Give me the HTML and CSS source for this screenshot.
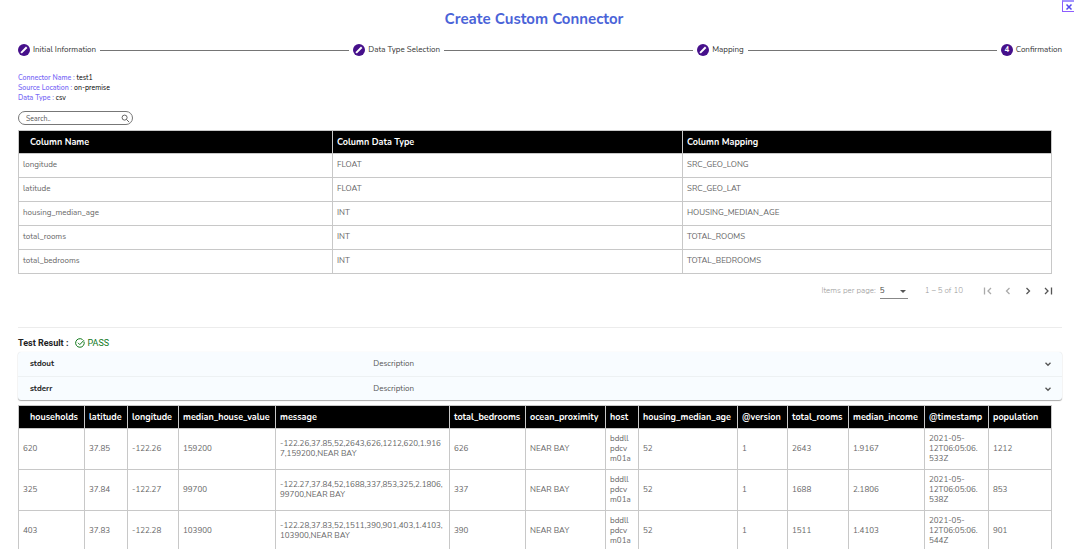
FILE: index.html
```
<!DOCTYPE html>
<html lang="en">
<head>
<meta charset="utf-8">
<title>Create Custom Connector</title>
<link rel="stylesheet" href="styles.css">
</head>
<body>
<main class="dialog">
  <button class="close" type="button" aria-label="Close"><svg viewBox="0 0 8 8"><path d="M1.5 1.5l5 5M6.5 1.5l-5 5"/></svg></button>
  <h1 class="title">Create Custom Connector</h1>

  <ol class="stepper">
    <li class="step"><span class="badge"><svg viewBox="0 0 12 12"><path d="M3.1 8.9L8.7 3.3"/></svg></span>Initial Information</li>
    <li class="rule" aria-hidden="true"></li>
    <li class="step"><span class="badge"><svg viewBox="0 0 12 12"><path d="M3.1 8.9L8.7 3.3"/></svg></span>Data Type Selection</li>
    <li class="rule" aria-hidden="true"></li>
    <li class="step"><span class="badge"><svg viewBox="0 0 12 12"><path d="M3.1 8.9L8.7 3.3"/></svg></span>Mapping</li>
    <li class="rule" aria-hidden="true"></li>
    <li class="step"><span class="badge">4</span>Confirmation</li>
  </ol>

  <ul class="summary">
    <li><span class="key">Connector Name :</span> test1</li>
    <li><span class="key">Source Location :</span> on-premise</li>
    <li><span class="key">Data Type :</span> csv</li>
  </ul>

  <div class="search">
    <input class="search-input" type="text" placeholder="Search.." aria-label="Search">
    <svg class="search-icon" viewBox="0 0 10 10"><circle cx="4" cy="4" r="2.8"/><path d="M6.1 6.1L9 9"/></svg>
  </div>

  <table class="grid mapping">
    <colgroup><col class="w-name"><col class="w-type"><col class="w-map"></colgroup>
    <thead><tr><th>Column Name</th><th>Column Data Type</th><th>Column Mapping</th></tr></thead>
    <tbody>
      <tr><td>longitude</td><td>FLOAT</td><td>SRC_GEO_LONG</td></tr>
      <tr><td>latitude</td><td>FLOAT</td><td>SRC_GEO_LAT</td></tr>
      <tr><td>housing_median_age</td><td>INT</td><td>HOUSING_MEDIAN_AGE</td></tr>
      <tr><td>total_rooms</td><td>INT</td><td>TOTAL_ROOMS</td></tr>
      <tr><td>total_bedrooms</td><td>INT</td><td>TOTAL_BEDROOMS</td></tr>
    </tbody>
  </table>

  <nav class="paginator" aria-label="Pagination">
    <label for="size">Items per page:</label>
    <span class="size-box"><select id="size" class="size"><option>5</option><option>10</option></select></span>
    <span class="range">1 – 5 of 10</span>
    <span class="pages">
      <button class="page" type="button" disabled aria-label="First page"><svg viewBox="0 0 10 10"><path d="M1.5 1.5v7M8 2L5 5l3 3"/></svg></button>
      <button class="page" type="button" disabled aria-label="Previous page"><svg viewBox="0 0 10 10"><path d="M6.5 2l-3 3 3 3"/></svg></button>
      <button class="page" type="button" aria-label="Next page"><svg viewBox="0 0 10 10"><path d="M3.5 2l3 3-3 3"/></svg></button>
      <button class="page" type="button" aria-label="Last page"><svg viewBox="0 0 10 10"><path d="M2 2l3 3-3 3M8.5 1.5v7"/></svg></button>
    </span>
  </nav>

  <section class="result">
    <h2 class="result-title">Test Result :
      <span class="pass"><svg viewBox="0 0 10 10"><path d="M9 3.6A4.3 4.3 0 1 1 7.6 1.6M3 4.8l1.8 1.8L9 2.2"/></svg>PASS</span>
    </h2>
    <div class="panels">
      <button class="panel" type="button"><b>stdout</b><span>Description</span><svg viewBox="0 0 8 8"><path d="M1.5 2.8L4 5.3l2.5-2.5"/></svg></button>
      <button class="panel" type="button"><b>stderr</b><span>Description</span><svg viewBox="0 0 8 8"><path d="M1.5 2.8L4 5.3l2.5-2.5"/></svg></button>
    </div>
    <table class="grid output">
      <colgroup><col class="c1"><col class="c2"><col class="c3"><col class="c4"><col class="c5"><col class="c6"><col class="c7"><col class="c8"><col class="c9"><col class="c10"><col class="c11"><col class="c12"><col class="c13"><col class="c14"></colgroup>
      <thead><tr><th>households</th><th>latitude</th><th>longitude</th><th>median_house_value</th><th>message</th><th>total_bedrooms</th><th>ocean_proximity</th><th>host</th><th>housing_median_age</th><th>@version</th><th>total_rooms</th><th>median_income</th><th>@timestamp</th><th>population</th></tr></thead>
      <tbody>
        <tr><td>620</td><td>37.85</td><td>-122.26</td><td>159200</td><td>-122.26,37.85,52,2643,626,1212,620,1.916<br>7,159200,NEAR BAY</td><td>626</td><td>NEAR BAY</td><td>bddll<br>pdcv<br>m01a</td><td>52</td><td>1</td><td>2643</td><td>1.9167</td><td>2021-05-<br>12T06:05:06.<br>533Z</td><td>1212</td></tr>
        <tr><td>325</td><td>37.84</td><td>-122.27</td><td>99700</td><td>-122.27,37.84,52,1688,337,853,325,2.1806,<br>99700,NEAR BAY</td><td>337</td><td>NEAR BAY</td><td>bddll<br>pdcv<br>m01a</td><td>52</td><td>1</td><td>1688</td><td>2.1806</td><td>2021-05-<br>12T06:05:06.<br>538Z</td><td>853</td></tr>
        <tr><td>403</td><td>37.83</td><td>-122.28</td><td>103900</td><td>-122.28,37.83,52,1511,390,901,403,1.4103,<br>103900,NEAR BAY</td><td>390</td><td>NEAR BAY</td><td>bddll<br>pdcv<br>m01a</td><td>52</td><td>1</td><td>1511</td><td>1.4103</td><td>2021-05-<br>12T06:05:06.<br>544Z</td><td>901</td></tr>
      </tbody>
    </table>
  </section>
</main>
</body>
</html>
```
FILE: styles.css
```
* { box-sizing: border-box; }
body {
  margin: 0;
  overflow: hidden;
  background: #fff;
  color: #000;
  font: 8px/10px Nunito, "Open Sans", "Noto Sans", sans-serif;
}
svg { fill: none; stroke: currentColor; display: block; }
button, input, select { font: inherit; color: inherit; margin: 0; padding: 0; border: 0; background: none; }
ol, ul { list-style: none; margin: 0; padding: 0; }

.dialog { position: relative; padding: 8px 12px 0 18px; }
.close {
  position: absolute; top: 0; right: 0;
  display: grid; place-items: center;
  width: 12px; height: 12px;
  border: 1px solid #8c5cff; border-right: 0; border-top: 2px solid #a394ff; color: #5548ee;
}
.close svg { width: 8px; height: 8px; stroke-width: 1.5; }
.title { margin: 0; font: 700 15px/22px Nunito, Lato, sans-serif; text-align: center; color: #4a63d8; padding-right: 12px; }

.stepper { display: flex; align-items: center; gap: 4px; margin-top: 13px; height: 14px; color: #333; }
.step { display: flex; align-items: center; gap: 3px; white-space: nowrap; }
.badge {
  display: grid; place-items: center;
  width: 12px; height: 12px; border-radius: 50%;
  background: #46108b; color: #fff; font-weight: 700;
}
.badge svg { width: 12px; height: 12px; stroke-width: 2; }
.rule { flex: 1; height: 1px; background: #757575; }

.summary { margin-top: 16px; font-size: 7px; }
.key { color: #7b6cf6; font-weight: 600; }

.search { display: flex; align-items: center; width: 115px; height: 14px; margin-top: 8px; padding: 0 2px 0 7px; border: 1px solid #777; border-radius: 7px; color: #555; }
.search-input { flex: 1; min-width: 0; height: 12px; outline: 0; font-size: 7px; }
.search-input::placeholder { color: #555; opacity: 1; }
.search-icon { width: 9px; height: 9px; }

.grid { table-layout: fixed; width: calc(100% - 10px); border-collapse: collapse; white-space: nowrap; }
.grid th, .grid td { border: 1px solid #c8c8c8; padding: 0 4px; text-align: left; vertical-align: middle; }
.grid th { height: 23px; background: #000; color: #fff; font: 700 9px/12px Nunito, "Open Sans", sans-serif; }
.grid th:first-child { padding-left: 11px; }
.grid td { height: 24px; color: #666; }
.mapping { margin-top: 5px; }
.mapping td { padding-bottom: 2px; }
.output td { height: 41px; }
.w-name { width: 314px; } .w-type { width: 350px; } .w-map { width: 369px; }
.c1 { width: 66px; } .c2 { width: 43px; } .c3 { width: 51px; } .c4 { width: 97px; }
.c5 { width: 174px; } .c6 { width: 76px; } .c7 { width: 80px; } .c8 { width: 33px; }
.c9 { width: 99px; } .c10 { width: 50px; } .c11 { width: 61px; } .c12 { width: 76px; }
.c13 { width: 64px; } .c14 { width: 63px; }

.paginator { display: flex; justify-content: flex-end; align-items: center; height: 34px; padding-right: 9px; color: #999; }
.paginator label { font-weight: 300; }
.size-box { position: relative; margin-left: 4px; border-bottom: 1px solid #888; }
.size-box::after {
  content: ""; position: absolute; right: 2px; top: 6px;
  border: 3px solid transparent; border-top-color: #555; border-bottom: 0;
}
.size { display: block; width: 28px; height: 14px; appearance: none; color: #444; }
.range { margin-left: 17px; font-weight: 300; }
.pages { display: flex; gap: 10px; margin-left: 20px; }
.page { color: #555; }
.page:disabled { color: #aaa; }
.page svg { width: 10px; height: 10px; stroke-width: 1.3; }

.result { margin-top: 19px; padding-top: 9px; border-top: 1px solid #ececec; }
.result-title { display: flex; align-items: center; gap: 7px; margin: 0; font: 700 9px/12px Roboto, sans-serif; color: #222; }
.pass { display: flex; align-items: center; gap: 2px; font-weight: 400; color: #10781a; }
.pass svg { width: 10px; height: 10px; stroke-width: 1; }
.panels { margin-top: 3px; border-radius: 3px; background: #f8fcff; box-shadow: 0 1px 1px #aaa, 0 0 1px #ddd; }
.panel { display: grid; grid-template-columns: 33% 1fr 8px; align-items: center; column-gap: 6px; width: 100%; height: 24px; padding: 0 10px 0 12px; text-align: left; color: #555; }
.panel + .panel { border-top: 1px solid #edf1f3; }
.panel b { color: #222; }
.panel svg { width: 8px; height: 8px; stroke-width: 1.3; }
.output { margin-top: 5px; }
```
